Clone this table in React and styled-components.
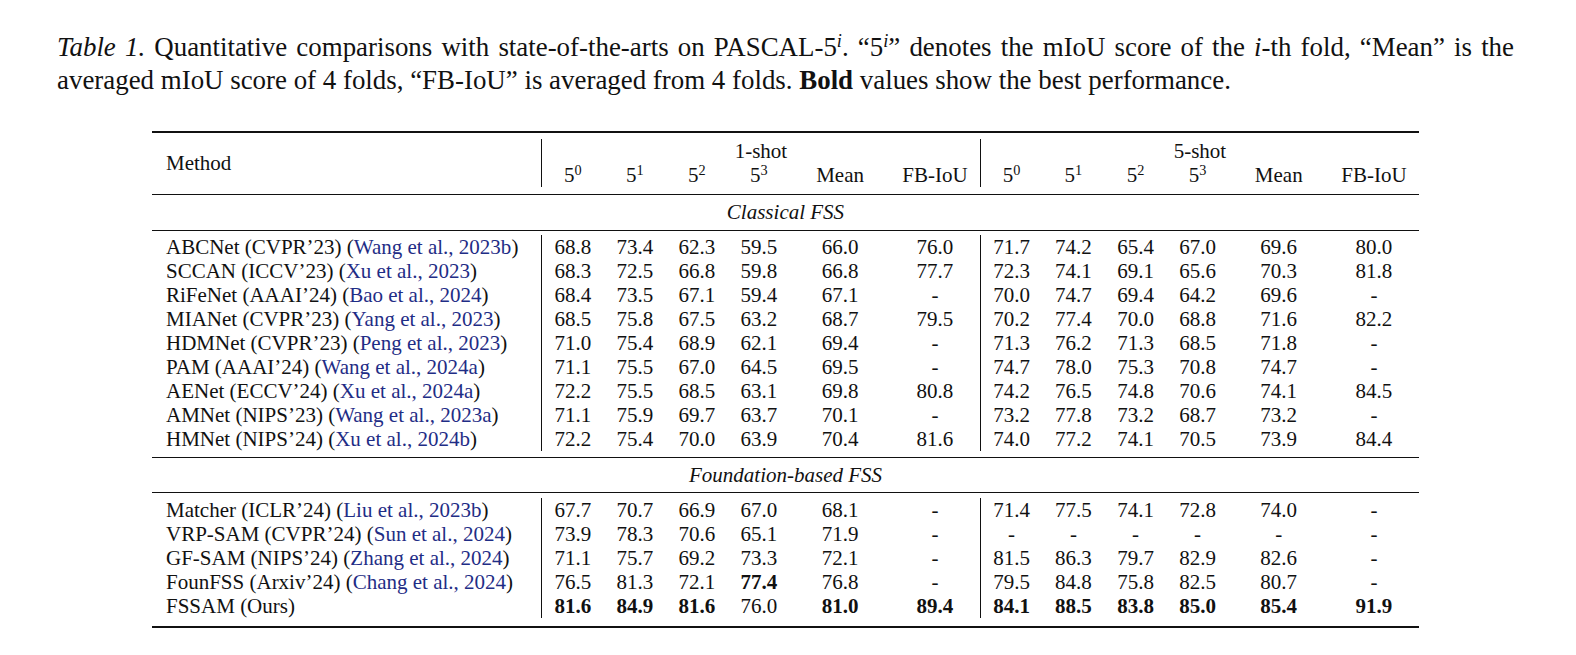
import React from 'react';
import styled, { createGlobalStyle } from 'styled-components';

const GlobalStyle = createGlobalStyle`
  html, body {
    margin: 0;
    background: #fff;
  }

  body {
    font-family: 'Liberation Serif', 'Times New Roman', serif;
    color: #111;
  }
`;

const Page = styled.div`
  width: 1576px;
  height: 655px;
  padding: 31px 0 0 57px;
  box-sizing: border-box;
  overflow: hidden;
`;

const Caption = styled.div`
  width: 1457px;
  font-family: 'Liberation Serif', 'Times New Roman', serif;
  font-size: 26.9px;
  line-height: 33px;
`;

const CaptionLine = styled.div`
  white-space: nowrap;
  text-align: ${({ $justify }) => ($justify ? 'justify' : 'left')};
  text-align-last: ${({ $justify }) => ($justify ? 'justify' : 'auto')};
`;

const Sup = styled.sup`
  font-size: 0.68em;
  line-height: 0;
  vertical-align: 0.5em;
`;

const Table = styled.table`
  margin: 34px 0 0 95px;
  width: 1267px;
  border-collapse: collapse;
  table-layout: fixed;
  font-size: 21px;
  line-height: 24px;
`;

const RuleCell = styled.td`
  padding: 0;
`;

const Rule = styled.div`
  margin: ${({ $above }) => $above}px 0 ${({ $below }) => $below}px;
  height: ${({ $thick }) => ($thick ? 2 : 1)}px;
  background: #111;
`;

const MethodHead = styled.th`
  padding: 0 0 0 14px;
  text-align: left;
  font-weight: normal;
  vertical-align: middle;
`;

const HeadCell = styled.th`
  padding: 0;
  height: 24px;
  text-align: center;
  font-weight: normal;
  white-space: nowrap;
  border-left: ${({ $bar }) => ($bar ? '1px solid #111' : 'none')};
`;

const GroupCell = styled.td`
  padding: 0;
  height: 24px;
  text-align: center;
  font-style: italic;
`;

const MethodCell = styled.td`
  padding: 0 0 0 14px;
  height: 24px;
  white-space: nowrap;
`;

const Cite = styled.span`
  color: #1f2d86;
`;

const Cell = styled.td`
  padding: 0;
  text-align: center;
  white-space: nowrap;
  font-weight: ${({ $bold }) => ($bold ? 'bold' : 'normal')};
  border-left: ${({ $bar }) => ($bar ? '1px solid #111' : 'none')};
`;

const halfCols = [62, 62, 62, 62, 100, 90];

const classical = [
  ['ABCNet (CVPR’23)', 'Wang et al., 2023b', '68.8 73.4 62.3 59.5 66.0 76.0', '71.7 74.2 65.4 67.0 69.6 80.0'],
  ['SCCAN (ICCV’23)', 'Xu et al., 2023', '68.3 72.5 66.8 59.8 66.8 77.7', '72.3 74.1 69.1 65.6 70.3 81.8'],
  ['RiFeNet (AAAI’24)', 'Bao et al., 2024', '68.4 73.5 67.1 59.4 67.1 -', '70.0 74.7 69.4 64.2 69.6 -'],
  ['MIANet (CVPR’23)', 'Yang et al., 2023', '68.5 75.8 67.5 63.2 68.7 79.5', '70.2 77.4 70.0 68.8 71.6 82.2'],
  ['HDMNet (CVPR’23)', 'Peng et al., 2023', '71.0 75.4 68.9 62.1 69.4 -', '71.3 76.2 71.3 68.5 71.8 -'],
  ['PAM (AAAI’24)', 'Wang et al., 2024a', '71.1 75.5 67.0 64.5 69.5 -', '74.7 78.0 75.3 70.8 74.7 -'],
  ['AENet (ECCV’24)', 'Xu et al., 2024a', '72.2 75.5 68.5 63.1 69.8 80.8', '74.2 76.5 74.8 70.6 74.1 84.5'],
  ['AMNet (NIPS’23)', 'Wang et al., 2023a', '71.1 75.9 69.7 63.7 70.1 -', '73.2 77.8 73.2 68.7 73.2 -'],
  ['HMNet (NIPS’24)', 'Xu et al., 2024b', '72.2 75.4 70.0 63.9 70.4 81.6', '74.0 77.2 74.1 70.5 73.9 84.4'],
];

const foundation = [
  ['Matcher (ICLR’24)', 'Liu et al., 2023b', '67.7 70.7 66.9 67.0 68.1 -', '71.4 77.5 74.1 72.8 74.0 -'],
  ['VRP-SAM (CVPR’24)', 'Sun et al., 2024', '73.9 78.3 70.6 65.1 71.9 -', '- - - - - -'],
  ['GF-SAM (NIPS’24)', 'Zhang et al., 2024', '71.1 75.7 69.2 73.3 72.1 -', '81.5 86.3 79.7 82.9 82.6 -'],
  ['FounFSS (Arxiv’24)', 'Chang et al., 2024', '76.5 81.3 72.1 *77.4 76.8 -', '79.5 84.8 75.8 82.5 80.7 -'],
  ['FSSAM (Ours)', null, '*81.6 *84.9 *81.6 76.0 *81.0 *89.4', '*84.1 *88.5 *83.8 *85.0 *85.4 *91.9'],
];

const HalfCells = ({ values }) =>
  values.split(' ').map((v, i) => (
    <Cell key={i} $bar={i === 0} $bold={v.startsWith('*')}>
      {v.replace('*', '')}
    </Cell>
  ));

const RuleRow = ({ above, below, thick }) => (
  <tr>
    <RuleCell colSpan={13}>
      <Rule $above={above} $below={below} $thick={thick} />
    </RuleCell>
  </tr>
);

const DataRow = ({ row }) => {
  const [name, cite, oneShot, fiveShot] = row;
  return (
    <tr>
      <MethodCell>
        {name}
        {cite && (
          <>
            {' '}(<Cite>{cite}</Cite>)
          </>
        )}
      </MethodCell>
      <HalfCells values={oneShot} />
      <HalfCells values={fiveShot} />
    </tr>
  );
};

const SubHeads = () =>
  ['0', '1', '2', '3'].map((n, i) => (
    <HeadCell key={n} $bar={i === 0}>
      5<Sup>{n}</Sup>
    </HeadCell>
  ));

const App = () => (
  <Page>
    <GlobalStyle />
    <Caption>
      <CaptionLine $justify>
        <i>Table 1.</i> Quantitative comparisons with state-of-the-arts on PASCAL-5<Sup><i>i</i></Sup>.
        “5<Sup><i>i</i></Sup>” denotes the mIoU score of the <i>i</i>-th fold, “Mean” is the
      </CaptionLine>
      <CaptionLine>
        averaged mIoU score of 4 folds, “FB-IoU” is averaged from 4 folds. <b>Bold</b> values show the best
        performance.
      </CaptionLine>
    </Caption>

    <Table>
      <colgroup>
        <col style={{ width: 389 }} />
        {[...halfCols, ...halfCols].map((w, i) => (
          <col key={i} style={{ width: w }} />
        ))}
      </colgroup>
      <tbody>
        <RuleRow above={0} below={6} thick />
        <tr>
          <MethodHead rowSpan={2}>Method</MethodHead>
          <HeadCell colSpan={6} $bar>1-shot</HeadCell>
          <HeadCell colSpan={6} $bar>5-shot</HeadCell>
        </tr>
        <tr>
          <SubHeads />
          <HeadCell>Mean</HeadCell>
          <HeadCell>FB-IoU</HeadCell>
          <SubHeads />
          <HeadCell>Mean</HeadCell>
          <HeadCell>FB-IoU</HeadCell>
        </tr>
        <RuleRow above={7} below={5} />
        <tr>
          <GroupCell colSpan={13}>Classical FSS</GroupCell>
        </tr>
        <RuleRow above={6} below={4} />
        {classical.map((row) => (
          <DataRow key={row[0]} row={row} />
        ))}
        <RuleRow above={6} below={5} />
        <tr>
          <GroupCell colSpan={13}>Foundation-based FSS</GroupCell>
        </tr>
        <RuleRow above={5} below={5} />
        {foundation.map((row) => (
          <DataRow key={row[0]} row={row} />
        ))}
        <RuleRow above={8} below={0} thick />
      </tbody>
    </Table>
  </Page>
);

export default App;
